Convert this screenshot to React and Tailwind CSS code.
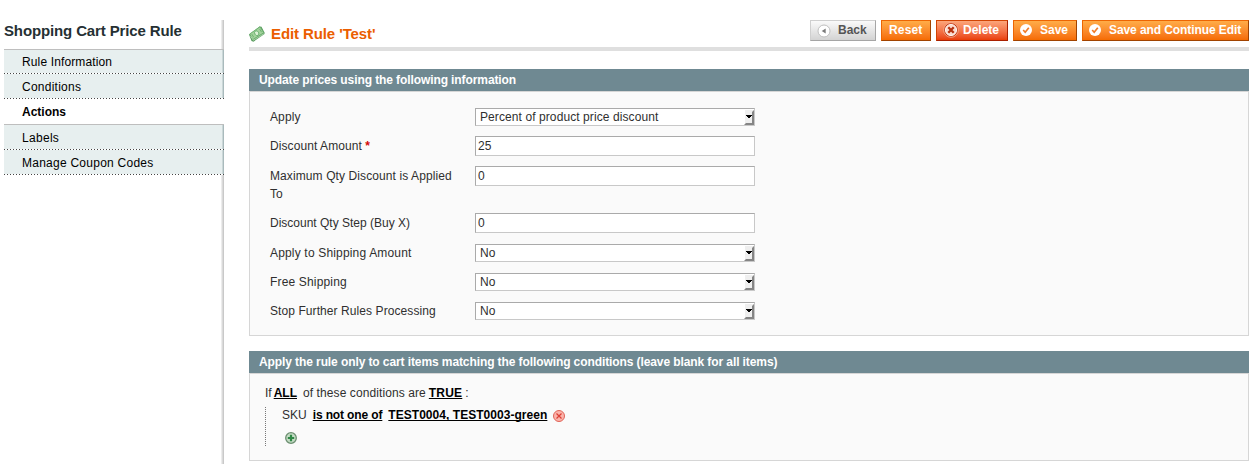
import React from 'react';

const tabs = [
  { label: 'Rule Information', spacing: 'tracking-[0.13px]' },
  { label: 'Conditions', spacing: 'tracking-[0.25px]' },
  { label: 'Actions', active: true, spacing: '' },
  { label: 'Labels', spacing: 'tracking-[0.3px]' },
  { label: 'Manage Coupon Codes', spacing: 'tracking-[0.25px]' },
];

function Sidebar() {
  return (
    <aside className="flex w-[224px] shrink-0 flex-col pl-1 pt-5">
      <div className="flex grow flex-col bg-[linear-gradient(to_right,transparent_217px,#ececec_217px,#ececec_218px,#dadada_218px,#dadada_219px,#c9c9c9_219px)]">
        <h3 className="h-[29px] text-[15px] font-bold leading-[22px] tracking-[-0.13px] text-[#253033]">
          Shopping Cart Price Rule
        </h3>
        <ul className="border-t border-[#bebebe] text-black">
          {tabs.map((t, i) => (
            <li
              key={t.label}
              className={
                t.spacing +
                ' ' +
                (t.active
                  ? 'h-[26px] border-b border-[#bebebe] bg-white pl-[18px] font-bold leading-[26px]'
                  : 'bg-[#e7efef] pl-[18px] bg-[linear-gradient(to_right,#444_1px,#fff_1px),linear-gradient(to_right,transparent_218px,#cbd7d8_218px,#cbd7d8_219px,#a9babc_219px)] [background-position:0_100%,0_0] [background-repeat:repeat-x,no-repeat] [background-size:3px_1px,100%_100%] ' +
                    (i === 0 ? 'h-6 leading-6' : 'h-[25px] leading-[26px]'))
              }
            >
              {t.label}
            </li>
          ))}
        </ul>
      </div>
    </aside>
  );
}

function MoneyIcon() {
  return (
    <svg width="16" height="16" viewBox="0 0 16 16">
      <path d="M0 8.500 10.500.500l2 .3 3 5.700v1.500L4.500 15.700 2.500 15z" fill="#5a9c5f" />
      <path d="M.7 8 11 .8l3.700 6L4 13.500z" fill="#a3d29c" stroke="#6aae6e" strokeWidth=".8" />
      <path d="m1.500 10 2.800 4.200L14.800 7.800" fill="none" stroke="#c5e6c1" strokeWidth=".7" />
      <ellipse cx="7.700" cy="7.200" rx="2" ry="2.500" fill="#dcf2d6" stroke="#5fab68" strokeWidth=".8" transform="rotate(-30 7.700 7.200)" />
      <path d="m2.800 8.200 1.900 3M10.600 3l2 3.200" stroke="#69b06e" strokeWidth=".9" />
    </svg>
  );
}

function BackIcon() {
  return (
    <svg width="14" height="14" viewBox="0 0 14 14" className="shrink-0">
      <circle cx="7" cy="7" r="6" fill="#fff" stroke="#c0c0c0" />
      <path d="M8.700 4.400v5.200L4.700 7z" fill="#7b7b7b" />
    </svg>
  );
}

function DeleteIcon() {
  return (
    <svg width="16" height="16" viewBox="0 0 16 16" className="mb-px shrink-0">
      <circle cx="8" cy="8" r="7.300" fill="#c83a12" stroke="#f7b497" strokeWidth=".8" />
      <circle cx="8" cy="8" r="5.600" fill="#fbdccf" stroke="#fff" strokeWidth=".9" />
      <path d="m5.300 5.300 5.400 5.400m0-5.400-5.400 5.400" stroke="#b5300f" strokeWidth="2.300" />
    </svg>
  );
}

function CheckIcon() {
  return (
    <svg width="12" height="12" viewBox="0 0 12 12" className="mb-px shrink-0">
      <circle cx="6" cy="6" r="6" fill="#fff" />
      <path d="m3.200 6 2 2.200 3.600-4.500" fill="none" stroke="#f17b27" strokeWidth="1.700" />
    </svg>
  );
}

function RemoveIcon() {
  return (
    <svg width="12" height="12" viewBox="0 0 12 12">
      <circle cx="6" cy="6" r="5.500" fill="#fbb3aa" stroke="#df6358" />
      <path d="m3.500 3.500 5 5m0-5-5 5" stroke="#dc3f36" strokeWidth="1.200" />
    </svg>
  );
}

function AddIcon() {
  return (
    <svg width="12" height="12" viewBox="0 0 12 12">
      <circle cx="6" cy="6" r="5.300" fill="#c4dcc4" stroke="#6b8e70" strokeWidth="1.300" />
      <path d="M6 2.800v6.400M2.800 6h6.400" stroke="#2f8746" strokeWidth="2.200" />
    </svg>
  );
}

const orange =
  'border-t-[#ed6502] border-l-[#ed6502] border-r-[#a04300] border-b-[#a04300] bg-linear-to-b from-[#ffac47] to-[#f56b00] text-white';

function Button({ className, icon, children }) {
  return (
    <button className={'flex h-[21px] items-center border font-bold leading-[18px] whitespace-nowrap ' + className}>
      {icon}
      <span className="pb-px">{children}</span>
    </button>
  );
}

function Header() {
  return (
    <div className="flex h-[31px] items-start justify-between border-b-4 border-[#dfdfdf]">
      <div className="flex items-center gap-[6px] pt-[3px]">
        <MoneyIcon />
        <h3 className="text-[15px] font-bold leading-[22px] tracking-[-0.1px] text-[#eb5e00]">Edit Rule 'Test'</h3>
      </div>
      <div className="flex gap-[5px]">
        <Button
          className="w-[66px] gap-[7px] border-t-[#cfcfcf] border-l-[#cfcfcf] border-r-[#a5a5a5] border-b-[#a5a5a5] bg-linear-to-b from-[#fafafa] to-[#d3d3d3] pl-[6px] text-[#555]"
          icon={<BackIcon />}
        >
          Back
        </Button>
        <Button className={'w-[50px] pl-[7px] tracking-[0.15px] ' + orange}>Reset</Button>
        <Button
          className="w-[72px] gap-[4px] border-t-[#d24403] border-l-[#d24403] border-r-[#a92000] border-b-[#a92000] bg-linear-to-b from-[#fba57a] to-[#e93d04] pl-[6px] text-white"
          icon={<DeleteIcon />}
        >
          Delete
        </Button>
        <Button className={'w-[64px] gap-[8px] pl-[6px] ' + orange} icon={<CheckIcon />}>
          Save
        </Button>
        <Button className={'w-[167px] gap-[8px] pl-[6px] tracking-[-0.09px] ' + orange} icon={<CheckIcon />}>
          Save and Continue Edit
        </Button>
      </div>
    </div>
  );
}

const box = 'w-[280px] border border-t-[#aaa] border-l-[#aaa] border-r-[#c8c8c8] border-b-[#c8c8c8] bg-white ';

function Select({ value }) {
  return (
    <div className={box + 'mt-px flex h-[18px] justify-between pl-1 leading-4'}>
      <span className="tracking-[0.09px]">{value}</span>
      <svg width="10" height="16" viewBox="0 0 10 16" className="shrink-0">
        <path d="M1 1h9v15H1z" fill="#efefef" />
        <path d="M10 1v15H0l2-2h6V3z" fill="#858585" />
        <path d="M2 6h6v1H7v1H6v1H4V8H3V7H2z" fill="#000" />
      </svg>
    </div>
  );
}

function Input({ value }) {
  return <div className={box + 'h-5 pl-[2px] leading-[18px]'}>{value}</div>;
}

const fields = [
  { label: 'Apply', value: 'Percent of product price discount', select: true, h: 'h-[29px]', spacing: 'tracking-[0.1px]' },
  { label: 'Discount Amount', value: '25', required: true, h: 'h-[30px]', spacing: 'tracking-[0.08px]' },
  { label: 'Maximum Qty Discount is Applied To', value: '0', h: 'h-[47px]', spacing: 'tracking-[0.1px]' },
  { label: 'Discount Qty Step (Buy X)', value: '0', h: 'h-[30px]', spacing: '' },
  { label: 'Apply to Shipping Amount', value: 'No', select: true, h: 'h-[29px]', spacing: 'tracking-[0.17px]' },
  { label: 'Free Shipping', value: 'No', select: true, h: 'h-[29px]', spacing: 'tracking-[0.16px]' },
  { label: 'Stop Further Rules Processing', value: 'No', select: true, h: 'h-[29px]', spacing: 'tracking-[0.08px]' },
];

function Panel({ title, className, children }) {
  return (
    <section>
      <h4 className="h-[22px] bg-[#6f8992] pl-[10px] font-bold leading-[22px] tracking-[-0.095px] text-white">{title}</h4>
      <div className={'border border-[#d6d6d6] bg-[#fafafa] ' + className}>{children}</div>
    </section>
  );
}

const param = 'underline [text-decoration-skip-ink:none] font-bold text-black ';

export default function App() {
  return (
    <div className="flex h-[464px] overflow-hidden bg-white font-['Liberation_Sans',Arial,sans-serif] text-[12px] text-[#2f2f2f]">
      <Sidebar />
      <main className="ml-[25px] w-[1000px] shrink-0 pt-5">
        <Header />
        <div className="mt-[18px] flex flex-col gap-[15px]">
          <Panel title="Update prices using the following information" className="h-[245px] pl-5 pt-[15px]">
            {fields.map((f) => (
              <div key={f.label} className={'flex ' + f.h}>
                <div className={'w-[205px] pr-[15px] pt-px leading-[18px] ' + f.spacing}>
                  {f.label}
                  {f.required && <span className="font-bold text-[#d40707]"> *</span>}
                </div>
                {f.select ? <Select value={f.value} /> : <Input value={f.value} />}
              </div>
            ))}
          </Panel>
          <Panel
            title="Apply the rule only to cart items matching the following conditions (leave blank for all items)"
            className="h-[88px] pl-[15px] pt-[13px]"
          >
            <div className="flex h-[14px] items-start leading-[13px]">
              <span>If</span>
              <span className={'ml-[2px] ' + param}>ALL</span>
              <span className="ml-[6px] tracking-[0.09px]">of these conditions are</span>
              <span className={'ml-[3px] tracking-[0.2px] ' + param}>TRUE</span>
              <span className="ml-[3px]">:</span>
            </div>
            <div className="mt-[6px] flex h-[39px] flex-col border-l border-dotted border-[#777] pl-4">
              <div className="flex items-start pt-[2px] leading-[13px]">
                <span>SKU</span>
                <span className={'ml-[6px] tracking-[-0.13px] ' + param}>is not one of</span>
                <span className={'ml-[6px] tracking-[0.04px] ' + param}>TEST0004, TEST0003-green</span>
                <span className="ml-[6px] mt-[1px]">
                  <RemoveIcon />
                </span>
              </div>
              <div className="ml-[3px] mt-[10px]">
                <AddIcon />
              </div>
            </div>
          </Panel>
        </div>
      </main>
    </div>
  );
}
